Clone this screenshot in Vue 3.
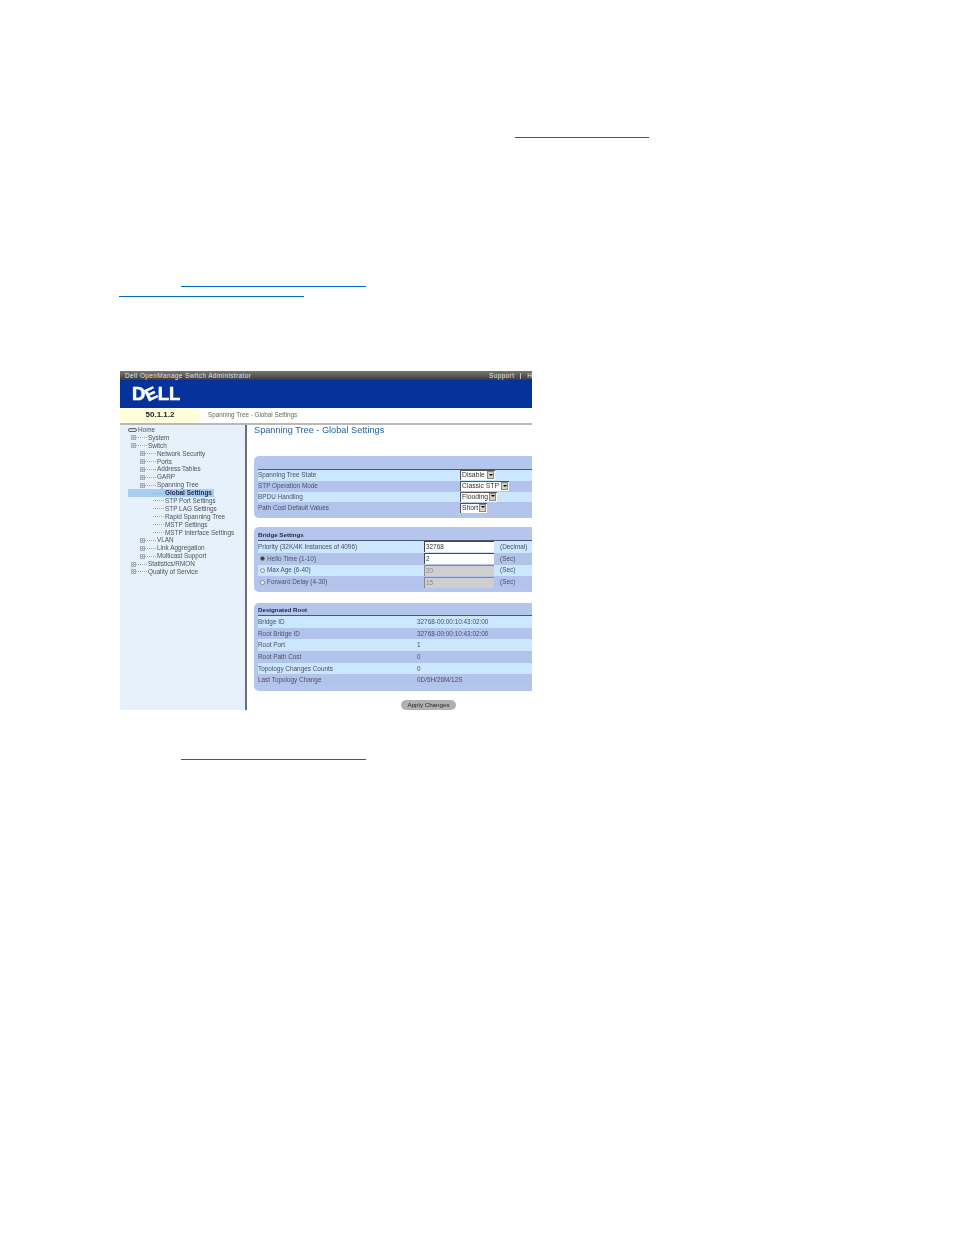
<script setup>
const tree = [
  { t: 'Home', l: 0, home: true },
  { t: 'System', l: 1 },
  { t: 'Switch', l: 1 },
  { t: 'Network Security', l: 2 },
  { t: 'Ports', l: 2 },
  { t: 'Address Tables', l: 2 },
  { t: 'GARP', l: 2 },
  { t: 'Spanning Tree', l: 2 },
  { t: 'Global Settings', l: 3, sel: true },
  { t: 'STP Port Settings', l: 3 },
  { t: 'STP LAG Settings', l: 3 },
  { t: 'Rapid Spanning Tree', l: 3 },
  { t: 'MSTP Settings', l: 3 },
  { t: 'MSTP Interface Settings', l: 3 },
  { t: 'VLAN', l: 2 },
  { t: 'Link Aggregation', l: 2 },
  { t: 'Multicast Support', l: 2 },
  { t: 'Statistics/RMON', l: 1 },
  { t: 'Quality of Service', l: 1 }
]
const state = [
  { t: 'Spanning Tree State', v: 'Disable', w: 35 },
  { t: 'STP Operation Mode', v: 'Classic STP', w: 49 },
  { t: 'BPDU Handling', v: 'Flooding', w: 37 },
  { t: 'Path Cost Default Values', v: 'Short', w: 27 }
]
const bridge = [
  { t: 'Priority (32K/4K Instances of 4096)', v: '32768', u: '(Decimal)' },
  { t: 'Hello Time (1-10)', v: '2', u: '(Sec)', radio: true, on: true },
  { t: 'Max Age (6-40)', v: '20', u: '(Sec)', radio: true, off: true },
  { t: 'Forward Delay (4-30)', v: '15', u: '(Sec)', radio: true, off: true }
]
const root = [
  ['Bridge ID', '32768-00:00:10:43:02:00'],
  ['Root Bridge ID', '32768-00:00:10:43:02:00'],
  ['Root Port', '1'],
  ['Root Path Cost', '0'],
  ['Topology Changes Counts', '0'],
  ['Last Topology Change', '0D/5H/26M/12S']
]
</script>

<template>
  <div class="page">
    <a class="link l1" href="#"></a>
    <a class="link l2" href="#"></a>
    <a class="link l3" href="#"></a>

    <div class="shot">
      <div class="topbar">
        <span>Dell OpenManage Switch Administrator</span>
        <span class="toplinks"><span>Support</span><i></i><span>Help</span></span>
      </div>
      <div class="brand">
        <div class="logo"><span>D</span><span class="e">E</span><span>LL</span></div>
      </div>
      <div class="crumb">
        <div class="ip">50.1.1.2</div>
        <div class="crumbtext">Spanning Tree - Global Settings</div>
      </div>
      <div class="body">
        <nav class="side">
          <div
            v-for="n in tree"
            :key="n.t"
            class="node"
            :class="['lv' + n.l, { sel: n.sel }]"
          >
            <span v-if="n.home" class="drive"></span>
            <template v-else>
              <span v-if="n.l < 3" class="plus"></span>
              <span class="dots"></span>
            </template>
            <span class="label">{{ n.t }}</span>
          </div>
        </nav>
        <main class="main">
          <h1>Spanning Tree - Global Settings</h1>

          <section class="panel p1">
            <div class="rows">
              <div v-for="(r, i) in state" :key="r.t" class="row state" :class="{ alt: i % 2 }">
                <span>{{ r.t }}</span>
                <span class="select" :style="{ width: r.w + 'px' }">
                  <span class="sv">{{ r.v }}</span><span class="arrow"></span>
                </span>
              </div>
            </div>
          </section>

          <section class="panel p2">
            <div class="ptitle">Bridge Settings</div>
            <div class="rows">
              <div v-for="(r, i) in bridge" :key="r.t" class="row br" :class="{ alt: i % 2 }">
                <span class="brl"><span v-if="r.radio" class="radio" :class="{ on: r.on }"></span>{{ r.t }}</span>
                <span class="input" :class="{ off: r.off }">{{ r.v }}</span>
                <span class="unit">{{ r.u }}</span>
              </div>
            </div>
          </section>

          <section class="panel p3">
            <div class="ptitle">Designated Root</div>
            <div class="rows">
              <div v-for="(r, i) in root" :key="r[0]" class="row rt" :class="{ alt: i % 2 }">
                <span>{{ r[0] }}</span><span>{{ r[1] }}</span>
              </div>
            </div>
          </section>

          <div class="apply"><span class="btn">Apply Changes</span></div>
        </main>
      </div>
    </div>

    <a class="link l4" href="#"></a>
  </div>
</template>

<style scoped>
.page {
  height: 1235px;
  background: #fff;
  overflow: hidden;
  font-family: "Liberation Sans", Arial, sans-serif;
  display: flex;
  flex-direction: column;
  align-items: flex-start;
  padding-top: 137px;
  box-sizing: border-box;
}
.link { display: block; height: 1px; background: #0066cc; }
.l1 { width: 134px; margin-left: 515px; }
.l2 { width: 185px; margin-left: 181px; margin-top: 148px; }
.l3 { width: 185px; margin-left: 119px; margin-top: 9px; }
.l4 { width: 185px; margin-left: 181px; margin-top: 49px; }

.shot {
  width: 412px;
  height: 339px;
  margin: 74px 0 0 120px;
  overflow: hidden;
  display: flex;
  flex-direction: column;
  font-size: 6.4px;
  line-height: 8px;
  color: #4a525e;
  filter: blur(0.45px);
  flex: none;
}
.topbar {
  height: 9px;
  flex: none;
  background: linear-gradient(#777, #3a3a3a);
  color: #e4e4e4;
  display: flex;
  justify-content: space-between;
  align-items: center;
  padding-left: 5px;
  white-space: nowrap;
  font-size: 6.4px;
  letter-spacing: 0.42px;
}
.toplinks { display: flex; align-items: center; width: 43px; overflow: hidden; flex: none; }
.toplinks i { width: 1px; height: 6px; background: #bbb; margin: 0 6px; flex: none; }
.brand {
  height: 28px;
  flex: none;
  background: #06339b;
  display: flex;
  align-items: center;
  padding-left: 12px;
}
.logo {
  color: #fff;
  font-weight: 700;
  font-size: 18.5px;
  line-height: 20px;
  letter-spacing: 0;
  -webkit-text-stroke: 0.6px #fff;
  display: flex;
}
.logo .e { transform: rotate(-25deg) scale(0.92); }
.crumb {
  flex: none;
  display: flex;
  border-bottom: 2px solid #b9b9b9;
  box-sizing: border-box;
  height: 17px;
}
.ip {
  width: 80px;
  background: #ffffdc;
  text-align: center;
  font-weight: 700;
  font-size: 8px;
  line-height: 14px;
  color: #222;
}
.crumbtext { padding-left: 8px; line-height: 14px; color: #666; font-size: 6.3px; }
.body { flex: 1; display: flex; min-height: 0; }
.side {
  width: 125px;
  flex: none;
  background: #e6f1fc;
  padding-top: 1px;
  box-sizing: border-box;
}
.node { height: 7.9px; line-height: 7.9px; display: flex; align-items: center; white-space: nowrap; }
.lv0 { padding-left: 8px; }
.lv1 { padding-left: 11px; }
.lv2 { padding-left: 20px; }
.lv3 { padding-left: 33px; }
.sel { background: #a9cdf2; margin-left: 8px; width: 86px; padding-left: 25px; box-sizing: border-box; font-weight: 700; color: #1c2a4a; }
.drive { width: 9px; height: 4px; border: 1px solid #666; border-radius: 2px; background: #ddd; box-sizing: border-box; flex: none; margin-right: 1px; }
.plus {
  width: 5px;
  height: 5px;
  border: 1px solid #a5abb5;
  box-sizing: border-box;
  flex: none;
  background:
    linear-gradient(#a5abb5, #a5abb5) center / 3px 1px no-repeat,
    linear-gradient(#a5abb5, #a5abb5) center / 1px 3px no-repeat;
}
.dots { width: 11px; border-top: 1px dotted #a5abb5; flex: none; margin-right: 1px; }
.main {
  flex: 1;
  min-width: 0;
  border-left: 2px solid #6e6e6e;
  background: #fff;
  padding-left: 7px;
  overflow: hidden;
}
h1 {
  margin: 0;
  height: 31px;
  font-weight: 400;
  font-size: 9.2px;
  line-height: 10px;
  color: #1f5f9e;
  white-space: nowrap;
}
.panel {
  width: 300px;
  border-radius: 5px;
  background-color: #b5c6ec;
  background-image: radial-gradient(#a9bce6 0.5px, transparent 0.6px);
  background-size: 2px 2px;
  padding: 0 0 4px 4px;
  box-sizing: border-box;
}
.p1 { padding-top: 13px; padding-bottom: 5px; }
.p2 { margin-top: 9px; }
.p3 { margin-top: 11px; padding-bottom: 5px; }
.ptitle {
  height: 13px;
  line-height: 16px;
  font-weight: 700;
  color: #20284a;
  font-size: 6.2px;
}
.p3 .ptitle { height: 12px; line-height: 14px; }
.rows { border-top: 1px solid #4a5570; }
.row { display: grid; align-items: center; background: #cbe6ff; white-space: nowrap; }
.row.alt { background: #b3c4ec; }
.state { height: 10.75px; grid-template-columns: 202px auto; justify-content: start; }
.select {
  height: 10px;
  background: #fff;
  box-shadow: inset 1px 1px 0 #555;
  display: flex;
  align-items: center;
  justify-content: space-between;
  padding-left: 2px;
  box-sizing: border-box;
  color: #333;
  overflow: hidden;
}
.sv { font-size: 6.8px; }
.arrow {
  width: 7px;
  height: 8px;
  margin-right: 1px;
  background: #d4d0c8;
  border: 1px solid #888;
  box-sizing: border-box;
  position: relative;
  flex: none;
}
.arrow::after {
  content: "";
  position: absolute;
  left: 0.5px;
  top: 1.5px;
  border: 2px solid transparent;
  border-top: 2px solid #000;
  border-bottom: 0;
}
.br { height: 11.75px; grid-template-columns: 166px 70px auto; justify-content: start; }
.brl { display: flex; align-items: center; }
.radio {
  width: 5px;
  height: 5px;
  border-radius: 50%;
  border: 1px solid #888;
  background: #fff;
  box-sizing: border-box;
  margin: 0 2px 0 2px;
}
.radio.on { background: #333; }
.input {
  height: 11px;
  line-height: 11px;
  background: #fff;
  box-shadow: inset 1px 1px 0 #444;
  padding-left: 2px;
  box-sizing: border-box;
  color: #333;
}
.input.off { background: #cfcfcf; color: #888; box-shadow: inset 1px 1px 0 #888; }
.unit { padding-left: 6px; }
.rt { height: 11.7px; grid-template-columns: 159px auto; justify-content: start; }
.apply { display: flex; margin-top: 9px; padding-left: 147px; }
.btn {
  width: 55px;
  height: 10px;
  line-height: 10px;
  border-radius: 5px;
  background: #b0b0b0;
  text-align: center;
  color: #222;
  white-space: nowrap;
  font-size: 6.2px;
}
</style>

<style>
body { margin: 0; background: #fff; }
</style>
